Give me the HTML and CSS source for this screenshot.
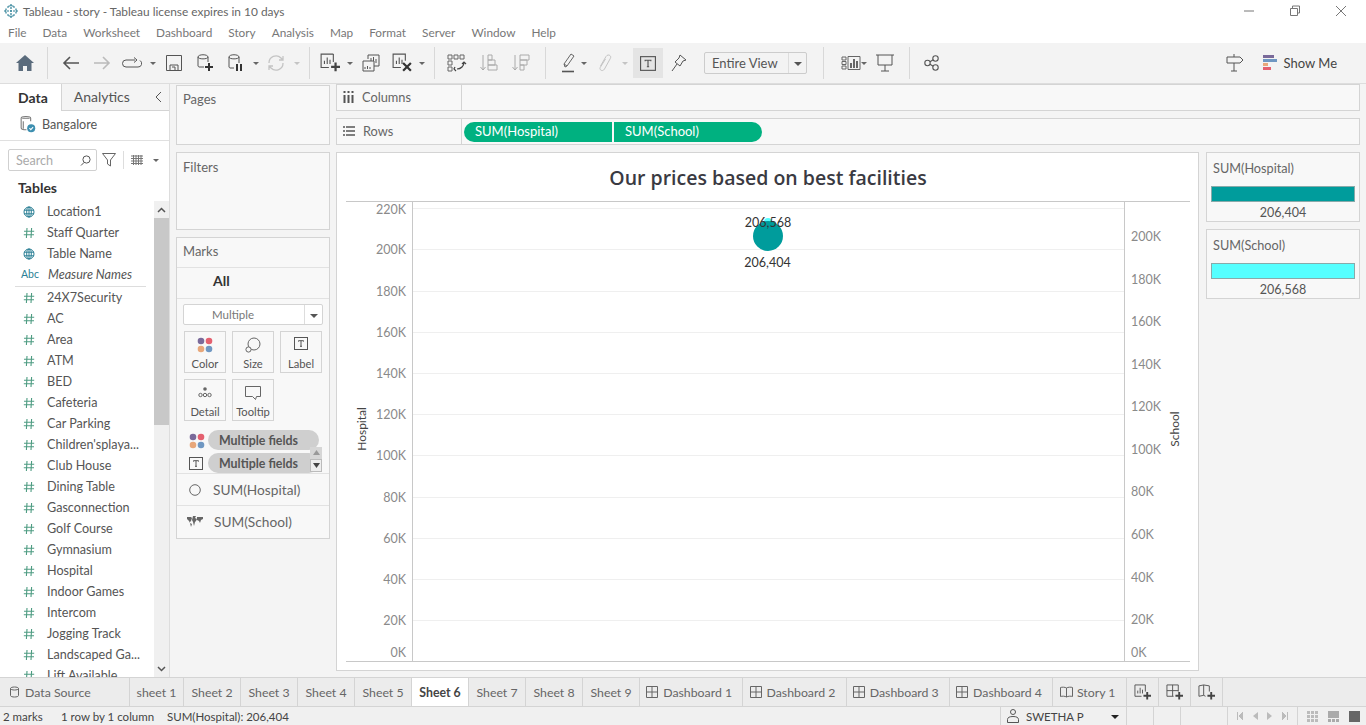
FILE: index.html
```html
<!DOCTYPE html>
<html lang="en">
<head>
    <meta charset="UTF-8">
    <title>Tableau - story - Tableau license expires in 10 days</title>
    <link rel="stylesheet" href="styles.css">
</head>
<body>
    <svg class="defs" width="0" height="0">
        <defs>
            <symbol id="hash" viewBox="0 0 12 12"><path d="M4 1 3.400 11M8.600 1 8 11M1 4.200h10.200M.8 7.800H11" fill="none" stroke="#4e9c82" stroke-width="1.100"/></symbol>
            <symbol id="globe" viewBox="0 0 12 12"><g fill="none" stroke="#2b7f95" stroke-width="1"><circle cx="6" cy="6" r="5"/><ellipse cx="6" cy="6" rx="2.300" ry="5"/><path d="M1 4.200h10M1 7.800h10M6 1v10"/></g></symbol>
            <symbol id="textbox" viewBox="0 0 14 13"><rect x=".5" y=".5" width="13" height="12" fill="none" stroke="#555"/><path d="M4.500 4.600V3.700h5v.9M7 3.700v5.600M6 9.300h2" fill="none" stroke="#555"/></symbol>
            <symbol id="dots" viewBox="0 0 16 16"><circle cx="4" cy="4" r="3.300" fill="#7a6a9a"/><circle cx="12" cy="4" r="3.300" fill="#e4606f"/><circle cx="4" cy="12" r="3.300" fill="#e8a77a"/><circle cx="12" cy="12" r="3.300" fill="#6f97c2"/></symbol>
            <symbol id="sheetadd" viewBox="0 0 18 18"><path d="M12 1H1v12h7" fill="none" stroke="#555"/><path d="M12 1v7" stroke="#555"/><path d="M4 10V7M6.500 10V4M9 10V6" stroke="#555" fill="none"/><path d="M14 8.500v8M10 12.500h8" stroke="#444" stroke-width="2"/></symbol>
            <symbol id="dashadd" viewBox="0 0 18 18"><path d="M8 13H1V1h12v7M7 1v12M1 7h12" fill="none" stroke="#555"/><path d="M14 8.500v8M10 12.500h8" stroke="#444" stroke-width="2"/></symbol>
            <symbol id="storyadd" viewBox="0 0 18 18"><path d="M8 13 6 12 1 13V2l5-1 6 1v6M6 1v11" fill="none" stroke="#555"/><path d="M14 8.500v8M10 12.500h8" stroke="#444" stroke-width="2"/></symbol>
            <symbol id="dash" viewBox="0 0 12 12"><path d="M.5.5h11v11H.5zM6 .5v11M.5 6h11" fill="none" stroke="#666"/></symbol>
        </defs>
    </svg>

    <header class="titlebar">
        <svg class="logo" width="16" height="16" viewBox="0 0 16 16"><path d="M8 1v14M1 8h14M5.500 3h5M5.500 13h5M3 5.500v5M13 5.500v5M4 4h2M10 4h2M4 12h2M10 12h2" fill="none" stroke="#2b7f95" stroke-width="1.200" stroke-dasharray="2 1"/></svg>
        <span class="window-title">Tableau - story - Tableau license expires in 10 days</span>
        <div class="window-btns">
            <svg width="12" height="12" viewBox="0 0 12 12"><path d="M1 6h10" stroke="#777"/></svg>
            <svg width="12" height="12" viewBox="0 0 12 12"><path d="M3.500 3V1h7v7h-2M1.500 3.500h7v7h-7z" fill="none" stroke="#777"/></svg>
            <svg width="12" height="12" viewBox="0 0 12 12"><path d="M1 1l10 10M11 1 1 11" stroke="#777" fill="none"/></svg>
        </div>
    </header>
    <nav class="menubar">
        <span>File</span><span>Data</span><span>Worksheet</span><span>Dashboard</span><span>Story</span><span>Analysis</span><span>Map</span><span>Format</span><span>Server</span><span>Window</span><span>Help</span>
    </nav>

    <div class="toolbar">
        <div class="btn"><svg width="18" height="16" viewBox="0 0 18 16"><path d="M9 0 0 8h2.500v8H7v-5h4v5h4.500V8H18z" fill="#5a6b7c"/></svg></div>
        <i class="sep sep-first"></i>
        <div class="btn"><svg width="18" height="14" viewBox="0 0 18 14"><path d="M17 7H2M8 1 2 7l6 6" fill="none" stroke="#555" stroke-width="1.600"/></svg></div>
        <div class="btn"><svg width="18" height="14" viewBox="0 0 18 14"><path d="M1 7h15M10 1l6 6-6 6" fill="none" stroke="#bbb" stroke-width="1.600"/></svg></div>
        <div class="btn btn-loop"><svg width="20" height="12" viewBox="0 0 20 12"><path d="M13 3H4a3.500 3.500 0 0 0 0 7h12a3.500 3.500 0 0 0 2-6.500M12 .5 15 3l-3 2.500" fill="none" stroke="#555"/></svg></div>
        <i class="caret"></i>
        <div class="btn"><svg width="16" height="16" viewBox="0 0 16 16"><path d="M.5.5h15v15H.5zM4 15.500V10h8v5.500M6 12h3v3.500" fill="none" stroke="#555"/></svg></div>
        <div class="btn"><svg width="18" height="18" viewBox="0 0 18 18"><path d="M8 13H3a2 2 0 0 1-1-1V3c0-3 10-3 10 0v5M2 3c0 2.500 10 2.500 10 0" fill="none" stroke="#555"/><path d="M13 9v8M9 13h8" stroke="#333" stroke-width="2"/></svg></div>
        <div class="btn"><svg width="18" height="18" viewBox="0 0 18 18"><path d="M7 14H3a2 2 0 0 1-1-1V3c0-3 10-3 10 0v6M2 3c0 2.500 10 2.500 10 0" fill="none" stroke="#555"/><path d="M10 10v7M14 10v7" stroke="#333" stroke-width="2"/></svg></div>
        <i class="caret"></i>
        <div class="btn btn-loop"><svg width="18" height="16" viewBox="0 0 18 16"><path d="M2 8a7 7 0 0 1 12-5l2 2M16 8a7 7 0 0 1-12 5l-2-2M16 1v4h-4M2 15v-4h4" fill="none" stroke="#c4c4c4" stroke-width="1.300"/></svg></div>
        <i class="caret caret-off"></i>
        <i class="sep sep-e"></i>
        <div class="btn"><svg width="20" height="20" viewBox="0 0 18 18"><use href="#sheetadd"/></svg></div>
        <i class="caret"></i>
        <div class="btn"><svg width="18" height="18" viewBox="0 0 18 18"><path d="M6 5V1h11v11h-5M1 7h11v10H1z" fill="#f3f3f3" stroke="#555"/><path d="M9 7V4M11.500 7V3M14 9V5M3 15v-2M5.500 15v-3M8 15v-2" stroke="#555" fill="none"/></svg></div>
        <div class="btn"><svg width="20" height="20" viewBox="0 0 18 18"><path d="M12 7V1H1v12h7" fill="none" stroke="#555"/><path d="M4 10V7M6.500 10V4M9 10V6" stroke="#555" fill="none"/><path d="m10 9 7 7M17 9l-7 7" stroke="#333" stroke-width="2"/></svg></div>
        <i class="caret"></i>
        <i class="sep sep-a"></i>
        <div class="btn"><svg width="20" height="18" viewBox="0 0 20 18"><path d="M1 1h4v4H1zM7 1h4v4H7zM13 1h4v4h-4zM1 7h4v4H1zM1 13h4v4H1z" fill="none" stroke="#666"/><path d="M17 8c0 4-3 7-7 7M8 13l-1 2 2 2M15 10l2-2 2 2" fill="none" stroke="#444" stroke-width="1.200"/></svg></div>
        <div class="btn btn-gap"><svg width="18" height="18" viewBox="0 0 18 18"><path d="M3 1v15M.5 13 3 16l2.500-3" fill="none" stroke="#aaa"/><path d="M8 1h4v5H8zM8 6h7v5H8zM8 11h9v5H8z" fill="none" stroke="#aaa"/></svg></div>
        <div class="btn btn-gap"><svg width="18" height="18" viewBox="0 0 18 18"><path d="M3 1v15M.5 13 3 16l2.500-3" fill="none" stroke="#aaa"/><path d="M8 1h9v5H8zM8 6h7v5H8zM8 11h4v5H8z" fill="none" stroke="#aaa"/></svg></div>
        <i class="sep sep-b"></i>
        <div class="btn btn-tight"><svg width="16" height="20" viewBox="0 0 16 20"><path d="M4 14 3 11l7-10 3 2-7 10zM3 11l3 2" fill="none" stroke="#666"/><path d="M1 18.500h12" stroke="#555" stroke-width="1.600"/></svg></div>
        <i class="caret"></i>
        <div class="btn"><svg width="14" height="20" viewBox="0 0 14 20"><path d="M2.500 13 8 3.500c1.800-3 6-1 4.300 2L6.500 16c-1.600 3-5.600 1.200-4.300-1.500L7.500 6" fill="none" stroke="#c4c4c4"/></svg></div>
        <i class="caret caret-off"></i>
        <div class="btn btn-on"><svg width="16" height="15"><use href="#textbox"/></svg></div>
        <div class="btn"><svg width="16" height="18" viewBox="0 0 16 18"><path d="M9 1l6 5-3 1-3 5-5-4 4-4zM6 10l-5 7" fill="none" stroke="#555"/></svg></div>
        <div class="fit-select"><span>Entire View</span><b><i class="caret caret-dark"></i></b></div>
        <i class="sep sep-c"></i>
        <div class="btn btn-tight2"><svg width="20" height="14" viewBox="0 0 20 14"><path d="M1 1h4v3H1zM1 5.500h4v3H1zM1 10h4v3H1zM7 .5h12v13H7z" fill="none" stroke="#666"/><path d="M10 12V7M13 12V3M16 12V5" stroke="#444" stroke-width="1.600"/></svg></div>
        <i class="caret"></i>
        <div class="btn"><svg width="18" height="18" viewBox="0 0 18 18"><path d="M0 1h18M2 1v10h14V1M9 11v6M5 17h8" fill="none" stroke="#555"/></svg></div>
        <i class="sep sep-d"></i>
        <div class="btn"><svg width="16" height="16" viewBox="0 0 16 16"><g fill="none" stroke="#555" stroke-width="1.100"><circle cx="3.500" cy="8" r="2.700"/><circle cx="11.500" cy="3.500" r="2.700"/><circle cx="11.500" cy="12.500" r="2.700"/><path d="m6 6.700 3.200-1.900M6 9.300l3.200 1.900"/></g></svg></div>
        <div class="toolbar-right">
            <svg width="18" height="18" viewBox="0 0 18 18"><path d="M1 3h13l3 3-3 3H1zM8 0v3M8 9v8M5 17h6" fill="none" stroke="#555"/></svg>
            <div class="showme"><svg width="16" height="16" viewBox="0 0 16 16"><path d="M0 0h11v3H0z" fill="#7a6a9a"/><path d="M0 4h14v3H0z" fill="#6f97c2"/><path d="M0 8h5v3H0z" fill="#e8a77a"/><path d="M0 12h8v3H0z" fill="#e4606f"/></svg><span>Show Me</span></div>
        </div>
    </div>

    <main class="workspace">
        <aside class="sidebar">
            <div class="side-tabs">
                <span class="side-tab active">Data</span>
                <span class="side-tab">Analytics</span>
                <svg class="collapse" width="7" height="10" viewBox="0 0 7 10"><path d="M6 0 1 5l5 5" fill="none" stroke="#555"/></svg>
            </div>
            <div class="source">
                <svg width="17" height="18" viewBox="0 0 16 17"><path d="M3 3h7M2 3c0-2 9-2 9 0v3M2 3v9c0 1 2 2 5 2M4 6v7" fill="none" stroke="#777"/><circle cx="11.500" cy="12.500" r="3.800" fill="#3d8fb0"/><path d="m9.800 12.500 1.300 1.300 2.200-2.400" fill="none" stroke="#fff"/></svg>
                <span>Bangalore</span>
            </div>
            <div class="search-row">
                <div class="search"><span>Search</span><svg width="11" height="11" viewBox="0 0 11 11"><circle cx="6.500" cy="4.500" r="3.600" fill="none" stroke="#555"/><path d="M4 7.500 1 10.500" stroke="#555"/></svg></div>
                <svg class="filter-icon" width="14" height="14" viewBox="0 0 14 14"><path d="M.5.5h13L8.500 7v6l-3-2V7z" fill="none" stroke="#666"/></svg>
                <i class="mini-sep"></i>
                <svg class="list-icon" width="12" height="10" viewBox="0 0 12 10"><path d="M0 1h12M0 3.500h12M0 6h12M0 8.500h12M2.500 0v10M5 0v10M7.500 0v10M10 0v10" stroke="#777" stroke-width="1"/></svg>
                <i class="caret caret-list"></i>
            </div>
            <h3 class="tables-head">Tables</h3>
            <div class="list-wrap">
                <ul class="fields">
                    <li><svg width="12" height="12"><use href="#globe"/></svg><span>Location1</span></li>
                    <li><svg width="12" height="12"><use href="#hash"/></svg><span>Staff Quarter</span></li>
                    <li><svg width="12" height="12"><use href="#globe"/></svg><span>Table Name</span></li>
                    <li class="names"><b>Abc</b><span>Measure Names</span></li>
                    <li><svg width="12" height="12"><use href="#hash"/></svg><span>24X7Security</span></li>
                    <li><svg width="12" height="12"><use href="#hash"/></svg><span>AC</span></li>
                    <li><svg width="12" height="12"><use href="#hash"/></svg><span>Area</span></li>
                    <li><svg width="12" height="12"><use href="#hash"/></svg><span>ATM</span></li>
                    <li><svg width="12" height="12"><use href="#hash"/></svg><span>BED</span></li>
                    <li><svg width="12" height="12"><use href="#hash"/></svg><span>Cafeteria</span></li>
                    <li><svg width="12" height="12"><use href="#hash"/></svg><span>Car Parking</span></li>
                    <li><svg width="12" height="12"><use href="#hash"/></svg><span>Children'splaya...</span></li>
                    <li><svg width="12" height="12"><use href="#hash"/></svg><span>Club House</span></li>
                    <li><svg width="12" height="12"><use href="#hash"/></svg><span>Dining Table</span></li>
                    <li><svg width="12" height="12"><use href="#hash"/></svg><span>Gasconnection</span></li>
                    <li><svg width="12" height="12"><use href="#hash"/></svg><span>Golf Course</span></li>
                    <li><svg width="12" height="12"><use href="#hash"/></svg><span>Gymnasium</span></li>
                    <li><svg width="12" height="12"><use href="#hash"/></svg><span>Hospital</span></li>
                    <li><svg width="12" height="12"><use href="#hash"/></svg><span>Indoor Games</span></li>
                    <li><svg width="12" height="12"><use href="#hash"/></svg><span>Intercom</span></li>
                    <li><svg width="12" height="12"><use href="#hash"/></svg><span>Jogging Track</span></li>
                    <li><svg width="12" height="12"><use href="#hash"/></svg><span>Landscaped Ga...</span></li>
                    <li><svg width="12" height="12"><use href="#hash"/></svg><span>Lift Available</span></li>
                </ul>
                <div class="scrollbar">
                    <span class="arrow"><svg width="9" height="6" viewBox="0 0 9 6"><path d="m1 5 3.500-3.500L8 5" fill="none" stroke="#555" stroke-width="1.500"/></svg></span>
                    <span class="thumb"></span>
                    <span class="arrow arrow-down"><svg width="9" height="6" viewBox="0 0 9 6"><path d="m1 1 3.500 3.500L8 1" fill="none" stroke="#555" stroke-width="1.500"/></svg></span>
                </div>
            </div>
        </aside>

        <section class="cards">
            <div class="card card-pages">Pages</div>
            <div class="card card-filters">Filters</div>
            <div class="card marks">
                <div class="marks-head">Marks</div>
                <div class="marks-all">All</div>
                <div class="marks-type"><span>Multiple</span><b><i class="caret caret-dark"></i></b></div>
                <div class="mark-btns">
                    <div class="mark-btn"><svg width="16" height="16"><use href="#dots"/></svg><span>Color</span></div>
                    <div class="mark-btn"><svg width="16" height="16" viewBox="0 0 16 16"><circle cx="9" cy="7" r="6" fill="none" stroke="#666"/><circle cx="3.500" cy="12.500" r="2.600" fill="#f8f8f8" stroke="#666"/></svg><span>Size</span></div>
                    <div class="mark-btn"><svg width="14" height="13"><use href="#textbox"/></svg><span>Label</span></div>
                    <div class="mark-btn"><svg width="14" height="14" viewBox="0 0 14 14"><circle cx="7" cy="4" r="1.800" fill="#666"/><circle cx="2.500" cy="10" r="1.700" fill="none" stroke="#666"/><circle cx="7" cy="10" r="1.700" fill="none" stroke="#666"/><circle cx="11.500" cy="10" r="1.700" fill="none" stroke="#666"/></svg><span>Detail</span></div>
                    <div class="mark-btn"><svg width="16" height="16" viewBox="0 0 16 16"><path d="M.5 1.500h15v10h-4l-1 3-3-3h-7z" fill="none" stroke="#666"/></svg><span>Tooltip</span></div>
                </div>
                <div class="encodings">
                    <div class="enc"><svg width="16" height="16"><use href="#dots"/></svg><span class="enc-pill">Multiple fields</span></div>
                    <div class="enc"><svg width="14" height="13"><use href="#textbox"/></svg><span class="enc-pill">Multiple fields</span></div>
                    <div class="enc-scroll">
                        <span class="enc-up"><svg width="7" height="5" viewBox="0 0 7 5"><path d="M3.500 0 7 5H0z" fill="#999"/></svg></span>
                        <span class="enc-down"><svg width="7" height="5" viewBox="0 0 7 5"><path d="M3.500 5 7 0H0z" fill="#444"/></svg></span>
                    </div>
                </div>
                <div class="mark-row"><svg width="12" height="12" viewBox="0 0 12 12"><circle cx="6" cy="6" r="5.300" fill="none" stroke="#666"/></svg><span>SUM(Hospital)</span></div>
                <div class="mark-row"><svg width="16" height="11" viewBox="0 0 16 11"><path d="M0 1h4l1 1-1 3-1 1v1l-1-2-2-2zM3 7l2 1-1 3zM6 0h3l-1 2 2 1-1 2-1 1-1 4-1-4-1-2zM10 1h6v2l-2 1-1 3-1-2-2-1z" fill="#666"/></svg><span>SUM(School)</span></div>
            </div>
        </section>

        <section class="view">
            <div class="shelf"><div class="shelf-label"><svg width="11" height="12" viewBox="0 0 11 12"><path d="M1.500 4v8M5.500 4v8M9.500 4v8" stroke="#555" stroke-width="2"/><path d="M1.500 0v2M5.500 0v2M9.500 0v2" stroke="#555" stroke-width="2"/></svg><span>Columns</span></div></div>
            <div class="shelf"><div class="shelf-label"><svg width="12" height="10" viewBox="0 0 12 10"><path d="M0 1h2M3 1h9M0 5h2M3 5h9M0 9h2M3 9h9" stroke="#555" stroke-width="1.400"/></svg><span>Rows</span></div>
                <div class="pills"><span class="pill pill-l">SUM(Hospital)</span><span class="pill pill-r">SUM(School)</span></div>
            </div>
            <div class="view-body">
                <div class="chart-card">
                    <h1 class="chart-title">Our prices based on best facilities</h1>
                    <svg class="chart" width="844" height="461" viewBox="0 0 844 461">
                        <g stroke="#efefef">
                            <path d="M67 7.500h711M67 48.500h711M67 90.500h711M67 131.500h711M67 172.500h711M67 213.500h711M67 254.500h711M67 296.500h711M67 337.500h711M67 378.500h711M67 419.500h711"/>
                        </g>
                        <path d="M0 .5h844M0 460.500h844" stroke="#c8c8c8"/>
                        <path d="M66.500 0v461M778.500 0v461" stroke="#c8c8c8"/>
                        <g class="tick tick-left">
                            <text x="60" y="13">220K</text><text x="60" y="53">200K</text><text x="60" y="95">180K</text><text x="60" y="136">160K</text><text x="60" y="177">140K</text><text x="60" y="218">120K</text><text x="60" y="259">100K</text><text x="60" y="301">80K</text><text x="60" y="342">60K</text><text x="60" y="383">40K</text><text x="60" y="424">20K</text><text x="60" y="456">0K</text>
                        </g>
                        <g class="tick">
                            <text x="785" y="40">200K</text><text x="785" y="83">180K</text><text x="785" y="125">160K</text><text x="785" y="168">140K</text><text x="785" y="210">120K</text><text x="785" y="253">100K</text><text x="785" y="295">80K</text><text x="785" y="338">60K</text><text x="785" y="381">40K</text><text x="785" y="423">20K</text><text x="785" y="456">0K</text>
                        </g>
                        <text class="axis-title" transform="translate(20 228) rotate(-90)">Hospital</text>
                        <text class="axis-title" transform="translate(833 228) rotate(-90)">School</text>
                        <circle cx="422" cy="21" r="4" fill="#5ff"/>
                        <circle cx="422" cy="35" r="15" fill="#009c9c"/>
                        <text class="mark-label" x="422" y="26">206,568</text>
                        <text class="mark-label" x="421.500" y="66">206,404</text>
                    </svg>
                </div>
                <div class="legends">
                    <div class="legend"><div class="legend-title">SUM(Hospital)</div><div class="swatch swatch-a"></div><div class="legend-value">206,404</div></div>
                    <div class="legend"><div class="legend-title">SUM(School)</div><div class="swatch swatch-b"></div><div class="legend-value">206,568</div></div>
                </div>
            </div>
        </section>
    </main>

    <div class="tabs">
        <div class="tab tab-source"><svg width="9" height="12" viewBox="0 0 9 12"><path d="M.5 2.500c0-2 8-2 8 0v7c0 2-8 2-8 0zM.5 2.500c0 2 8 2 8 0" fill="none" stroke="#666"/></svg>Data Source</div>
        <div class="tab tab-s1">sheet 1</div>
        <div class="tab tab-sheet">Sheet 2</div>
        <div class="tab tab-sheet">Sheet 3</div>
        <div class="tab tab-sheet">Sheet 4</div>
        <div class="tab tab-sheet">Sheet 5</div>
        <div class="tab tab-sheet tab-active">Sheet 6</div>
        <div class="tab tab-sheet">Sheet 7</div>
        <div class="tab tab-sheet">Sheet 8</div>
        <div class="tab tab-sheet">Sheet 9</div>
        <div class="tab tab-dash"><svg width="12" height="12"><use href="#dash"/></svg>Dashboard 1</div>
        <div class="tab tab-dash"><svg width="12" height="12"><use href="#dash"/></svg>Dashboard 2</div>
        <div class="tab tab-dash"><svg width="12" height="12"><use href="#dash"/></svg>Dashboard 3</div>
        <div class="tab tab-dash"><svg width="12" height="12"><use href="#dash"/></svg>Dashboard 4</div>
        <div class="tab tab-story"><svg width="13" height="12" viewBox="0 0 13 12"><path d="M6.500 2C5 1 2 1 .5 1.500v9C2 10 5 10 6.500 11 8 10 11 10 12.500 10.500v-9C11 1 8 1 6.500 2zM6.500 2v9" fill="none" stroke="#666"/></svg>Story 1</div>
        <div class="tab tab-add"><svg width="17" height="17"><use href="#sheetadd"/></svg></div>
        <div class="tab tab-add"><svg width="17" height="17"><use href="#dashadd"/></svg></div>
        <div class="tab tab-add"><svg width="17" height="17"><use href="#storyadd"/></svg></div>
    </div>

    <footer class="statusbar">
        <span class="st-marks">2 marks</span>
        <span class="st-rows">1 row by 1 column</span>
        <span>SUM(Hospital): 206,404</span>
        <div class="st-right">
            <div class="st-user"><svg width="12" height="14" viewBox="0 0 12 14"><circle cx="6" cy="3" r="2.500" fill="none" stroke="#555"/><path d="M.5 13.500v-3c0-2 2-3 5.500-3s5.500 1 5.500 3v3z" fill="none" stroke="#555"/></svg><span>SWETHA P</span><i class="caret caret-user"></i></div>
            <div class="st-cell"></div><div class="st-cell"></div><div class="st-cell st-wide"></div>
            <div class="st-nav">
                <svg width="6" height="8" viewBox="0 0 6 8"><path d="M.5 0v8M6 0v8L2 4z" stroke="#bbb" fill="#bbb" stroke-width="1"/></svg>
                <svg width="5" height="8" viewBox="0 0 5 8"><path d="M5 0v8L0 4z" fill="#bbb"/></svg>
                <svg width="5" height="8" viewBox="0 0 5 8"><path d="M0 0v8l5-4z" fill="#bbb"/></svg>
                <svg width="6" height="8" viewBox="0 0 6 8"><path d="M5.500 0v8M0 0v8l4-4z" stroke="#bbb" fill="#bbb" stroke-width="1"/></svg>
            </div>
            <div class="st-views">
                <svg width="11" height="11" viewBox="0 0 11 11"><path d="M0 1.500h11M0 5.500h11M0 9.500h11" stroke="#bbb" stroke-width="3" stroke-dasharray="3 1"/></svg>
                <svg width="11" height="11" viewBox="0 0 11 11"><path d="M0 0h11v7H0z" fill="#aaa"/><path d="M0 9.500h11" stroke="#aaa" stroke-width="3" stroke-dasharray="3 1"/></svg>
                <svg width="11" height="11" viewBox="0 0 11 11"><path d="M0 0h11v11H0z" fill="#666"/></svg>
            </div>
        </div>
    </footer>
</body>
</html>
```

FILE: styles.css
```css
* {
    box-sizing: border-box;
}
html, body {
    height: 100%;
}
body {
    margin: 0;
    width: 1366px;
    height: 725px;
    overflow: hidden;
    display: flex;
    flex-direction: column;
    font-family: Lato, "Open Sans", sans-serif;
    font-size: 12.6px;
    color: #555;
    background: #f4f4f4;
}
.defs {
    position: absolute;
}
svg {
    flex: none;
    display: block;
}

/* window chrome */
.titlebar {
    height: 21px;
    background: #fff;
    display: flex;
    align-items: center;
    padding-left: 3px;
    flex: none;
}
.window-title {
    margin-left: 4px;
    padding-top: 1px;
    font-size: 11.9px;
    color: #666;
}
.window-btns {
    margin-left: auto;
    display: flex;
    gap: 34px;
    padding-right: 19px;
}
.menubar {
    height: 22px;
    flex: none;
    background: #fff;
    display: flex;
    align-items: center;
    padding-left: 8px;
    gap: 16px;
    font-size: 11.8px;
    color: #777;
}

/* toolbar */
.toolbar {
    height: 41px;
    flex: none;
    display: flex;
    align-items: center;
    padding-left: 9px;
    background: #f3f3f3;
    border-bottom: 1px solid #ddd;
}
.btn {
    width: 31px;
    height: 30px;
    flex: none;
    display: flex;
    align-items: center;
    justify-content: center;
}
.btn-loop {
    margin-left: -1px;
    margin-right: 1px;
}
.btn-gap {
    margin-left: 1px;
}
.btn-tight {
    margin-right: -5px;
}
.btn-tight2 {
    margin-right: -7px;
}
.btn-on {
    width: 30px;
    margin-left: 3px;
    background: #e4e4e4;
}
.caret {
    width: 10px;
    height: 10px;
    flex: none;
    position: relative;
    display: block;
}
.caret::after {
    content: "";
    position: absolute;
    left: 2px;
    top: 4px;
    border: 3px solid transparent;
    border-top: 3px solid #666;
    border-bottom: 0;
}
.caret-off::after {
    border-top-color: #c4c4c4;
}
.caret-dark::after {
    left: 1px;
    border-width: 4px 4px 0;
    border-top-color: #555;
}
.sep {
    width: 1px;
    height: 32px;
    flex: none;
    background: #d8d8d8;
}
.sep-first {
    margin: 0 7px;
}
.sep-e {
    margin: 0 4px 0 7px;
}
.sep-a {
    margin: 0 6px 0 7px;
}
.sep-b {
    margin: 0 7px 0 9px;
}
.sep-c {
    margin: 0 11px 0 16px;
}
.sep-d {
    margin: 0 6px 0 9px;
}
.fit-select {
    width: 103px;
    height: 22px;
    margin-left: 10px;
    flex: none;
    display: flex;
    align-items: center;
    border: 1px solid #ccc;
    border-radius: 2px;
    font-size: 13px;
}
.fit-select span {
    flex: 1;
    padding-left: 7px;
}
.fit-select b, .marks-type b {
    width: 18px;
    height: 100%;
    display: flex;
    align-items: center;
    justify-content: center;
    border-left: 1px solid #ddd;
}
.toolbar-right {
    margin-left: auto;
    display: flex;
    align-items: center;
    gap: 19px;
    padding-right: 29px;
}
.showme {
    display: flex;
    align-items: center;
    gap: 5px;
    font-size: 13px;
    color: #444;
}

/* main */
.workspace {
    flex: 1;
    min-height: 0;
    display: flex;
}
.sidebar {
    width: 170px;
    flex: none;
    display: flex;
    flex-direction: column;
    background: #fff;
    border-right: 1px solid #ddd;
}
.side-tabs {
    height: 27px;
    flex: none;
    display: flex;
    align-items: center;
    position: relative;
    background: #f4f4f4;
}
.side-tab {
    height: 100%;
    width: 108px;
    padding: 0 0 1px 12px;
    display: flex;
    align-items: center;
    font-size: 14px;
    color: #555;
    border-bottom: 1px solid #d4d4d4;
}
.side-tab.active {
    width: 62px;
    padding-left: 18px;
    font-weight: 700;
    color: #333;
    background: #fff;
    border-bottom: 0;
    border-right: 1px solid #d4d4d4;
}
.collapse {
    position: absolute;
    right: 7px;
    top: 8px;
}
.source {
    height: 30px;
    flex: none;
    display: flex;
    align-items: center;
    gap: 6px;
    padding: 0 0 3px 19px;
    border-bottom: 1px solid #e0e0e0;
}
.search-row {
    height: 39px;
    flex: none;
    display: flex;
    align-items: center;
    padding: 0 0 1px 8px;
}
.search {
    width: 89px;
    height: 22px;
    display: flex;
    align-items: center;
    justify-content: space-between;
    padding: 0 5px 0 7px;
    border: 1px solid #d0d0d0;
    border-radius: 2px;
    color: #aaa;
}
.filter-icon {
    margin-left: 5px;
}
.mini-sep {
    width: 1px;
    height: 18px;
    margin: 0 7px;
    background: #ddd;
}
.list-icon {
    margin-right: 7px;
}
.caret-list {
    margin-left: 1px;
}
.tables-head {
    margin: 0;
    height: 21px;
    flex: none;
    padding-left: 18px;
    font-size: 14px;
    line-height: 16px;
    color: #333;
}
.list-wrap {
    flex: 1;
    min-height: 0;
    display: flex;
    overflow: hidden;
}
.fields {
    list-style: none;
    margin: 0;
    padding: 0;
    width: 154px;
}
.fields li {
    height: 21px;
    display: flex;
    align-items: center;
    padding-left: 23px;
    gap: 12px;
    white-space: nowrap;
    color: #555;
}
.fields li.names {
    height: 23px;
    padding-bottom: 2px;
    gap: 9px;
    margin-right: 8px;
    margin-left: 15px;
    padding-left: 6px;
    border-bottom: 1px solid #ddd;
}
.names b {
    font-weight: 400;
    font-size: 10.5px;
    color: #2b7f95;
}
.names span {
    font-style: italic;
}
.scrollbar {
    width: 15px;
    flex: none;
    display: flex;
    flex-direction: column;
    background: #f0f0f0;
}
.arrow {
    height: 17px;
    flex: none;
    display: flex;
    align-items: center;
    justify-content: center;
}
.arrow-down {
    margin-top: auto;
}
.thumb {
    height: 207px;
    background: #c8c8c8;
}

/* cards column */
.cards {
    width: 154px;
    flex: none;
    margin-left: 6px;
    display: flex;
    flex-direction: column;
    padding-top: 1px;
}
.card {
    background: #f8f8f8;
    border: 1px solid #d4d4d4;
    color: #666;
    font-size: 13px;
}
.card-pages {
    height: 60px;
    padding: 5px 6px;
}
.card-filters {
    height: 78px;
    margin-top: 7px;
    padding: 6px;
}
.marks {
    height: 302px;
    margin-top: 7px;
    display: flex;
    flex-direction: column;
}
.marks-head {
    height: 30px;
    flex: none;
    padding: 5px 6px;
    border-bottom: 1px solid #e2e2e2;
}
.marks-all {
    height: 31px;
    flex: none;
    padding: 0 0 5px 36px;
    display: flex;
    align-items: center;
    font-weight: 700;
    font-size: 14px;
    color: #333;
    border-bottom: 1px solid #e2e2e2;
}
.marks-type {
    height: 21px;
    flex: none;
    margin: 5px 6px 0;
    display: flex;
    align-items: center;
    border: 1px solid #d4d4d4;
    border-radius: 2px;
    background: #fff;
    font-size: 11.5px;
}
.marks-type span {
    flex: 1;
    padding-right: 22px;
    text-align: center;
    color: #777;
}
.mark-btns {
    margin: 6px 7px 0;
    display: grid;
    grid-template-columns: repeat(3, 42px);
    grid-auto-rows: 42px;
    gap: 6px;
}
.mark-btn {
    display: flex;
    flex-direction: column;
    align-items: center;
    justify-content: space-between;
    padding: 5px 0 2px;
    border: 1px solid #d4d4d4;
    font-size: 11.2px;
    color: #555;
}
.encodings {
    position: relative;
    height: 45px;
    flex: none;
    margin-top: 8px;
    border-bottom: 1px solid #e2e2e2;
}
.enc {
    height: 23px;
    padding-left: 12px;
    display: flex;
    align-items: center;
    position: relative;
}
.enc-pill {
    position: absolute;
    left: 31px;
    top: 1px;
    width: 111px;
    height: 20px;
    padding-left: 11px;
    display: flex;
    align-items: center;
    border-radius: 10px;
    background: #cfcfcf;
    font-size: 12.4px;
    font-weight: 700;
    color: #555;
}
.enc-scroll {
    position: absolute;
    right: 7px;
    top: 18px;
    width: 12px;
    height: 25px;
    display: flex;
    flex-direction: column;
}
.enc-up, .enc-down {
    flex: 1;
    display: flex;
    align-items: center;
    justify-content: center;
}
.enc-up {
    background: #d6d6d6;
}
.enc-down {
    background: #eee;
    border: 1px solid #bbb;
}
.mark-row {
    height: 32px;
    flex: none;
    display: flex;
    align-items: center;
    gap: 12px;
    padding-left: 12px;
    font-size: 13.7px;
    border-bottom: 1px solid #e2e2e2;
}
.mark-row:last-child {
    border-bottom: 0;
    padding-bottom: 2px;
}
.mark-row svg[width="16"] {
    margin-left: -2px;
    margin-right: -1px;
}

/* shelves and view */
.view {
    flex: 1;
    margin: 0 6px;
    min-width: 0;
    display: flex;
    flex-direction: column;
}
.shelf {
    height: 27px;
    flex: none;
    margin-bottom: 7px;
    display: flex;
    background: #f8f8f8;
    border: 1px solid #d4d4d4;
}
.shelf-label {
    width: 125px;
    flex: none;
    display: flex;
    align-items: center;
    gap: 8px;
    padding: 0 0 2px 6px;
    font-size: 12.8px;
    color: #666;
    border-right: 1px solid #d4d4d4;
}
.pills {
    display: flex;
    gap: 2px;
    margin-left: 2px;
    align-items: center;
}
.pill {
    width: 148px;
    height: 20px;
    display: flex;
    align-items: center;
    padding: 0 0 1px 11px;
    background: #00b180;
    color: #fff;
    font-size: 13px;
}
.pill-l {
    border-radius: 10px 0 0 10px;
}
.pill-r {
    border-radius: 0 10px 10px 0;
}
.view-body {
    display: flex;
    gap: 7px;
    flex: 1;
    min-height: 0;
}
.chart-card {
    width: 863px;
    height: 519px;
    flex: none;
    padding: 0 8px 0 9px;
    background: #fff;
    border: 1px solid #d4d4d4;
}
.chart-title {
    margin: 0;
    height: 48px;
    padding-top: 12px;
    text-align: center;
    font-size: 19.5px;
    line-height: 26px;
    font-weight: 600;
    color: #3a3a42;
    font-family: "Open Sans", Lato, sans-serif;
}
.tick text {
    font-size: 12.5px;
    fill: #8a8a8a;
}
.tick-left text {
    text-anchor: end;
}
.axis-title {
    font-size: 12px;
    fill: #444;
    text-anchor: middle;
}
.mark-label {
    font-size: 12.5px;
    fill: #333;
    text-anchor: middle;
}
.legends {
    width: 154px;
    flex: none;
    display: flex;
    flex-direction: column;
    gap: 7px;
}
.legend {
    height: 70px;
    background: #f8f8f8;
    border: 1px solid #d4d4d4;
    padding: 7px 4px 0;
    display: flex;
    flex-direction: column;
}
.legend-title {
    height: 26px;
    padding-left: 2px;
    font-size: 12.7px;
    color: #666;
}
.swatch {
    height: 16px;
    flex: none;
    border: 1px solid #8aa;
}
.swatch-a {
    background: #009c9c;
}
.swatch-b {
    background: #5ff;
}
.legend-value {
    text-align: center;
    font-size: 12.5px;
    line-height: 16px;
    margin-top: 3px;
    color: #555;
}

/* sheet tabs */
.tabs {
    height: 30px;
    flex: none;
    display: flex;
    background: #ececec;
    border-top: 1px solid #d4d4d4;
    border-bottom: 1px solid #d4d4d4;
    font-size: 12.3px;
    color: #666;
}
.tab {
    height: 100%;
    flex: none;
    display: flex;
    align-items: center;
    justify-content: center;
    gap: 6px;
    border-right: 1px solid #d4d4d4;
}
.tab-source {
    width: 130px;
    justify-content: flex-start;
    padding-left: 10px;
}
.tab-s1 {
    width: 54px;
}
.tab-sheet {
    width: 57px;
}
.tab-active {
    background: #fff;
    font-weight: 700;
    color: #444;
}
.tab-dash {
    width: 103.3px;
    gap: 5px;
    padding-right: 4px;
}
.tab-story {
    width: 74px;
    gap: 4px;
    padding-right: 4px;
}
.tab-add {
    width: 32px;
}

/* status bar */
.statusbar {
    height: 18px;
    flex: none;
    display: flex;
    align-items: center;
    padding: 0 0 0 3px;
    font-size: 11.5px;
    color: #444;
    background: #f0f0f0;
}
.statusbar > span {
    padding-top: 1px;
}
.st-marks {
    width: 58px;
}
.st-rows {
    width: 106px;
}
.st-right {
    margin-left: auto;
    height: 100%;
    display: flex;
    align-items: center;
}
.st-user {
    width: 127px;
    height: 100%;
    display: flex;
    align-items: center;
    gap: 7px;
    padding-left: 6px;
    border-left: 1px solid #d4d4d4;
    border-right: 1px solid #d4d4d4;
}
.st-user span {
    flex: 1;
}
.caret-user {
    margin-right: 5px;
}
.caret-user::after {
    left: 0;
    border-width: 4px 4px 0;
    border-top-color: #222;
}
.st-cell {
    width: 27px;
    height: 100%;
    border-right: 1px solid #d4d4d4;
}
.st-cell.st-wide {
    width: 47px;
}
.st-nav {
    width: 70px;
    padding: 0 9px;
    display: flex;
    justify-content: space-between;
    align-items: center;
    border-right: 1px solid #d4d4d4;
    height: 100%;
}
.st-views {
    display: flex;
    gap: 10px;
    padding: 0 6px 0 9px;
}
```
